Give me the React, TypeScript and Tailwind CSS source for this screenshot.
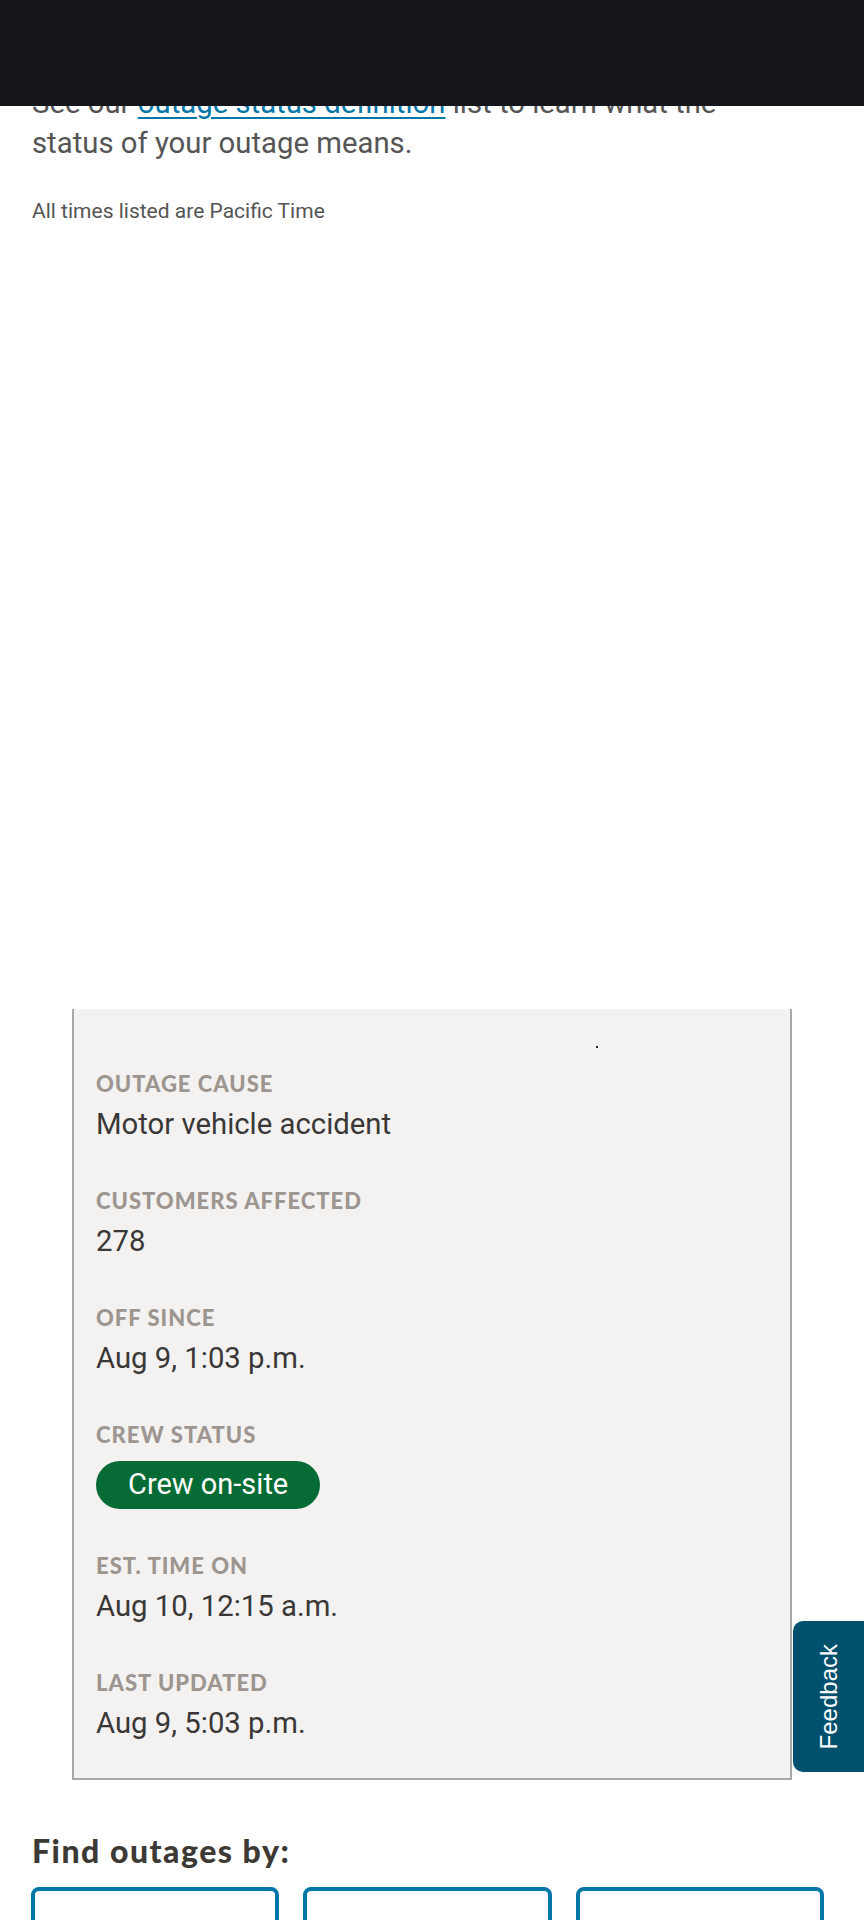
import React from 'react';

type Detail = { label: string; value?: string; badge?: string };

const DETAILS: Detail[] = [
	{ label: 'Outage cause', value: 'Motor vehicle accident' },
	{ label: 'Customers affected', value: '278' },
	{ label: 'Off since', value: 'Aug 9, 1:03 p.m.' },
	{ label: 'Crew status', badge: 'Crew on-site' },
	{ label: 'Est. time on', value: 'Aug 10, 12:15 a.m.' },
	{ label: 'Last updated', value: 'Aug 9, 5:03 p.m.' },
];

function DetailRow({ detail }: { detail: Detail }) {
	return (
		<div className="flex flex-col">
			<h3 className="font-[Lato,sans-serif] text-[22px] leading-[24px] font-black uppercase tracking-[1px] text-[#9d958f]">
				{detail.label}
			</h3>
			{detail.badge ? (
				<span className="mt-[14px] flex h-[48px] w-fit items-center rounded-full bg-[#066b35] px-8 text-[29px] text-white">
					{detail.badge}
				</span>
			) : (
				<p className="mt-2 text-[29.3px] leading-[40px] text-[#3a3836]">{detail.value}</p>
			)}
		</div>
	);
}

export default function App() {
	return (
		<div className="relative h-[1920px] w-full overflow-hidden bg-white font-['Roboto',sans-serif]">
			<header className="absolute inset-x-0 top-0 z-10 h-[106px] bg-[#15161b]" />

			<main className="flex flex-col px-8 pt-[83px]">
				<p className="w-[760px] text-[29.3px] leading-[40px] text-[#555555]">
					See our{' '}
					<a href="#" className="text-[#0076a9] underline decoration-[1.5px] underline-offset-[4px]">
						outage status definition
					</a>{' '}
					list to learn what the status of your outage means.
				</p>
				<p className="mt-[33px] text-[21px] leading-[31.5px] text-[#555555]">
					All times listed are Pacific Time
				</p>

				{/* map area (blank) */}
				<div className="h-[781px]" />

				<section className="relative mx-10 w-[720px] border-x-2 border-b-2 border-[#a8a8a8] bg-[#f3f2f1] px-[22px] pt-[63px] pb-[35px]">
					<span className="absolute top-[37px] left-[522px] h-[2px] w-[2px] bg-[#222]" />
					<div className="flex flex-col gap-[45px]">
						{DETAILS.map((d) => (
							<DetailRow key={d.label} detail={d} />
						))}
					</div>
				</section>

				<h2 className="mt-[52px] font-[Lato,sans-serif] text-[32px] leading-[38px] font-black tracking-[1.5px] text-[#3d3935]">
					Find outages by:
				</h2>
				<div className="mt-[17px] grid w-[793px] -translate-x-px grid-cols-3 gap-6">
					<div className="h-[120px] rounded-lg border-4 border-[#0076a9]" />
					<div className="h-[120px] rounded-lg border-4 border-[#0076a9]" />
					<div className="h-[120px] rounded-lg border-4 border-[#0076a9]" />
				</div>
			</main>

			<button className="absolute top-[1621px] right-0 flex h-[151px] w-[71px] items-center justify-center rounded-l-[10px] bg-[#00506e]">
				<span className="rotate-180 font-['Liberation_Sans',Arial,sans-serif] text-[24px] text-white [writing-mode:vertical-rl]">
					Feedback
				</span>
			</button>
		</div>
	);
}
